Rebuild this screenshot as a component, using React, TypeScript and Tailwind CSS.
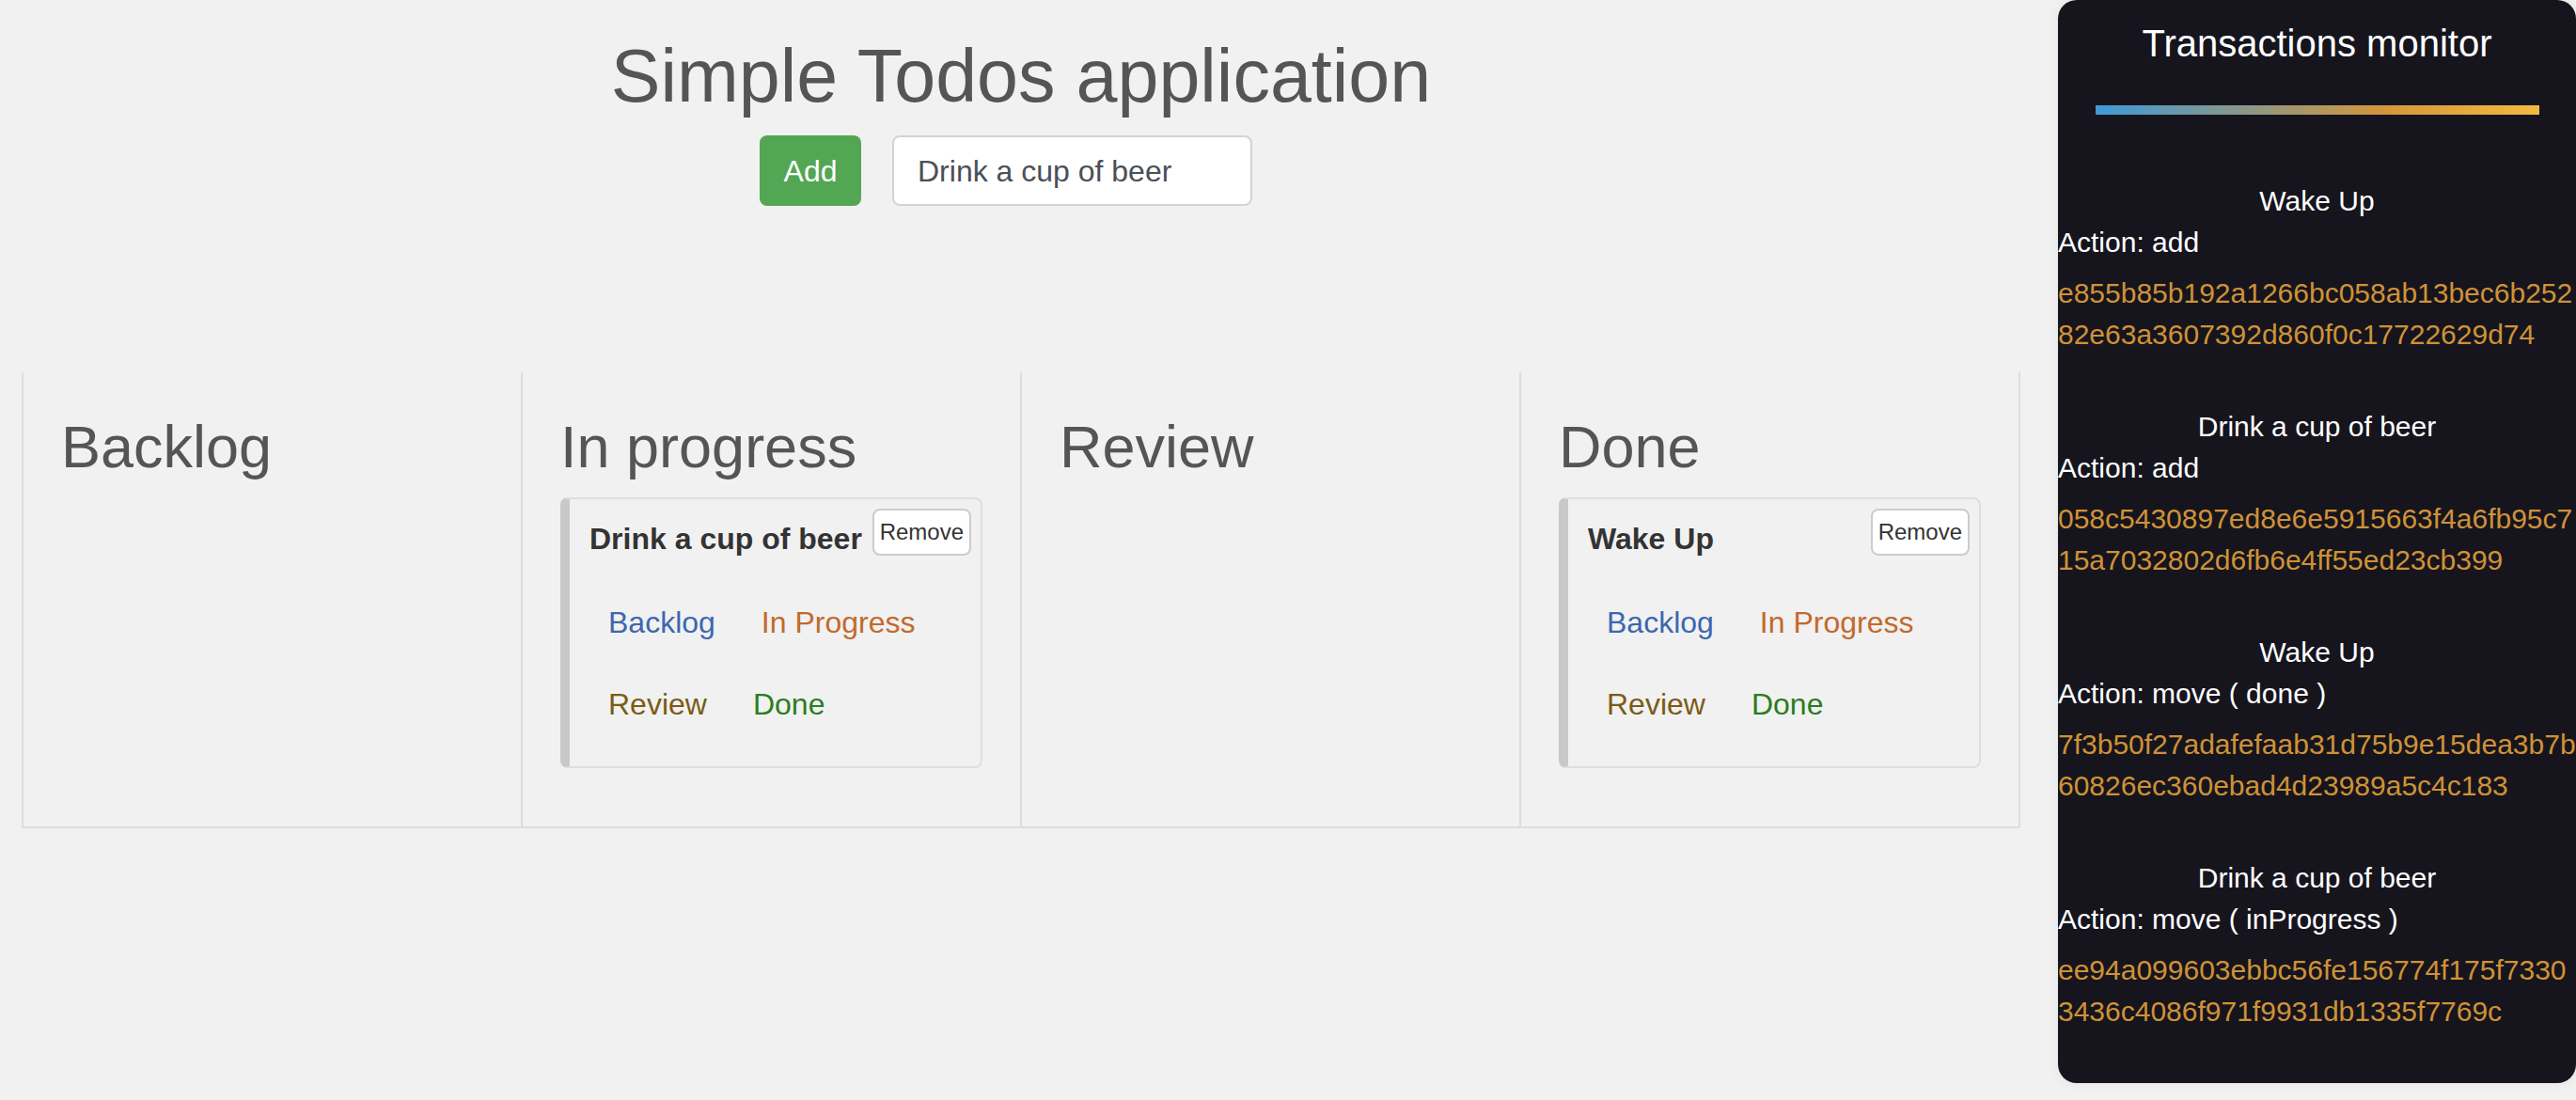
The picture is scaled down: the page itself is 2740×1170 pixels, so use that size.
import React from "react";

type Todo = { title: string };

const columns: { name: string; todos: Todo[] }[] = [
  { name: "Backlog", todos: [] },
  { name: "In progress", todos: [{ title: "Drink a cup of beer" }] },
  { name: "Review", todos: [] },
  { name: "Done", todos: [{ title: "Wake Up" }] },
];

const transactions = [
  {
    title: "Wake Up",
    action: "add",
    hash: "e855b85b192a1266bc058ab13bec6b25282e63a3607392d860f0c17722629d74",
  },
  {
    title: "Drink a cup of beer",
    action: "add",
    hash: "058c5430897ed8e6e5915663f4a6fb95c715a7032802d6fb6e4ff55ed23cb399",
  },
  {
    title: "Wake Up",
    action: "move ( done )",
    hash: "7f3b50f27adafefaab31d75b9e15dea3b7b60826ec360ebad4d23989a5c4c183",
  },
  {
    title: "Drink a cup of beer",
    action: "move ( inProgress )",
    hash: "ee94a099603ebbc56fe156774f175f73303436c4086f971f9931db1335f7769c",
  },
];

function Card({ title }: { title: string }) {
  return (
    <div className="rounded-[8px] border-2 border-l-[10px] border-[#dedede] border-l-[#c9c9c9] pb-[34px] pl-[21px] pr-[10px] pt-[10px]">
      <div className="flex items-start justify-between">
        <span className="mt-[14px] text-[32px] font-bold leading-[36px] text-[#333333]">
          {title}
        </span>
        <button className="h-[50px] rounded-[8px] border-2 border-[#cccccc] bg-white px-[6px] text-[24px] leading-[30px] text-[#333333]">
          Remove
        </button>
      </div>
      <div className="mt-[39px] flex flex-wrap gap-x-[9px] gap-y-[23px] text-[32px] leading-[40px]">
        <span className="px-[20px] py-[12px] text-[#3d67b0]">Backlog</span>
        <span className="px-[20px] py-[12px] text-[#c2692c]">In Progress</span>
        <span className="px-[20px] py-[12px] text-[#7b5b17]">Review</span>
        <span className="px-[20px] py-[12px] text-[#2d7c1e]">Done</span>
      </div>
    </div>
  );
}

export default function App() {
  return (
    <div className="flex h-[1170px] w-[2740px] overflow-hidden bg-[#f1f1f1] font-['Liberation_Sans',Arial,sans-serif]">
      <main className="w-[2172px] shrink-0">
        <h1 className="mt-[37px] text-center text-[79px] leading-[88px] text-[#555555]">
          Simple Todos application
        </h1>
        <div className="mt-[19px] flex justify-center gap-[33px] pr-[32px]">
          <button className="h-[75px] w-[108px] rounded-[8px] bg-[#53a653] text-[32px] text-white">
            Add
          </button>
          <div className="flex h-[75px] w-[383px] items-center rounded-[8px] border-2 border-[#ced4da] bg-white px-[25px] text-[32px] text-[#495057]">
            Drink a cup of beer
          </div>
        </div>
        <div className="ml-[23px] mt-[177px] flex w-[2126px] border-b-2 border-[#dddddd]">
          {columns.map((col, i) => (
            <div
              key={col.name}
              className={
                i === columns.length - 1
                  ? "w-[533px] border-x-2 border-[#dddddd] px-[40px] pb-[62px] pt-[44px]"
                  : "w-[531px] border-l-2 border-[#dddddd] px-[40px] pb-[62px] pt-[44px]"
              }
            >
              <h2 className="mb-[19px] text-[63px] leading-[70px] text-[#555555]">
                {col.name}
              </h2>
              {col.todos.map((t) => (
                <Card key={t.title} title={t.title} />
              ))}
            </div>
          ))}
        </div>
      </main>
      <aside className="ml-[17px] h-[1152px] w-[551px] shrink-0 rounded-[20px] bg-[#16151e] text-[30px] text-white shadow-[0_0_14px_rgba(0,0,0,0.06)]">
        <div className="pt-[22px] text-center text-[40px] leading-[48px]">
          Transactions monitor
        </div>
        <div className="mx-auto mt-[42px] h-[10px] w-[472px] bg-[linear-gradient(to_right,#3e9ad9,#d4963a_65%,#f3ba40)]" />
        <div className="mt-[70px] flex flex-col gap-[54px]">
          {transactions.map((t, i) => (
            <div key={i}>
              <div className="text-center leading-[44px]">{t.title}</div>
              <div className="leading-[44px]">Action: {t.action}</div>
              <div className="mt-[10px] w-[554px] break-all leading-[44px] text-[#cf9236]">
                {t.hash}
              </div>
            </div>
          ))}
        </div>
      </aside>
    </div>
  );
}
